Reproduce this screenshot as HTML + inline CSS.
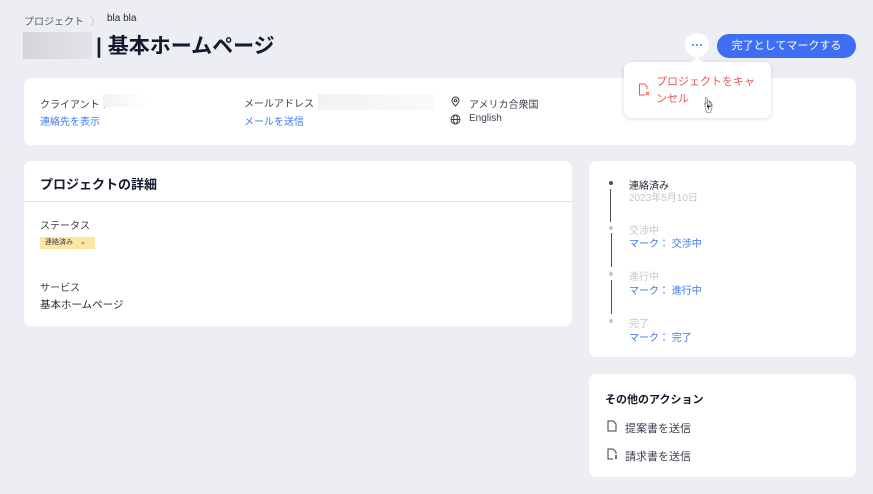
<!DOCTYPE html>
<html><head><meta charset="utf-8"><style>
*{margin:0;padding:0;box-sizing:border-box}
body{width:873px;height:494px;background:#eceef3;font-family:"Liberation Sans","Noto Sans CJK JP",sans-serif;position:relative;overflow:hidden;color:#1f2433}
.a{position:absolute}
.card{position:absolute;background:#fff;border-radius:7px}
.s{font-size:10px;color:#3a3f4d}
.lnk{font-size:10px;color:#3b78f0}
.g{color:#c4c7cf}
</style></head><body>
<div class="a" style="left:24px;top:13px;font-size:10px;color:#555a66">プロジェクト</div>
<div class="a" style="left:90px;top:13px;font-size:10px;color:#c0c3ca">〉</div>
<div class="a" style="left:107px;top:13px;font-size:10px;color:#1f2433">bla bla</div>
<div class="a" style="left:23px;top:32px;width:69px;height:27px;background:linear-gradient(90deg,#d3d5da,#e2e4e8)"></div>
<div class="a" style="left:96px;top:30px;font-size:21px;font-weight:bold;color:#141a2b">| 基本ホームページ</div>
<div class="a" style="left:685px;top:33px;width:24px;height:24px;border-radius:50%;background:#fff"></div>
<div class="a" style="left:692px;top:44px;width:2px;height:2px;background:#3b78f0;border-radius:1px;box-shadow:4px 0 0 #3b78f0,8px 0 0 #3b78f0"></div>
<div class="a" style="left:717px;top:34px;width:139px;height:24px;border-radius:12px;background:#3e6ef3;color:#fff;font-size:11px;text-align:center;line-height:24px">完了としてマークする</div>

<div class="card" style="left:24px;top:78px;width:832px;height:67px"></div>
<div class="a s" style="left:40px;top:96px">クライアント：</div>
<div class="a" style="left:103px;top:94px;width:45px;height:13px;background:linear-gradient(90deg,#f1f2f4,#fff)"></div>
<div class="a lnk" style="left:40px;top:113px">連絡先を表示</div>
<div class="a s" style="left:244px;top:95px">メールアドレス：</div>
<div class="a" style="left:318px;top:94px;width:116px;height:16px;background:linear-gradient(90deg,#f1f2f4,#fafafa)"></div>
<div class="a lnk" style="left:244px;top:113px">メールを送信</div>
<svg class="a" style="left:450px;top:96px" width="11" height="11" viewBox="0 0 11 11" fill="none" stroke="#3a3f4d"><path d="M5.5 10C3 7.5 2 6 2 4.5a3.5 3.5 0 0 1 7 0C9 6 8 7.5 5.5 10z"/><circle cx="5.5" cy="4.5" r="1.3"/></svg>
<div class="a s" style="left:469px;top:96px">アメリカ合衆国</div>
<svg class="a" style="left:450px;top:114px" width="11" height="11" viewBox="0 0 11 11" fill="none" stroke="#3a3f4d"><circle cx="5.5" cy="5.5" r="4.5"/><ellipse cx="5.5" cy="5.5" rx="2" ry="4.5"/><path d="M1 5.5h9"/></svg>
<div class="a s" style="left:469px;top:113px">English</div>

<div class="card" style="left:624px;top:62px;width:147px;height:56px;box-shadow:0 1px 5px rgba(0,0,0,.15)"></div>
<div class="a" style="left:693px;top:58px;width:8px;height:8px;background:#fff;transform:rotate(45deg)"></div>
<svg class="a" style="left:638px;top:83px" width="12" height="13" viewBox="0 0 12 13" fill="none" stroke="#e8585a"><path d="M7 12H1.5V1h5l2.5 2.5V6"/><path d="M8 9l3 3M11 9l-3 3"/></svg>
<div class="a" style="left:656px;top:74px;font-size:11px;line-height:17px;color:#e8585a;width:105px">プロジェクトをキャンセル</div>
<div class="a" style="left:700px;top:92px;font-size:16px">☝</div>

<div class="card" style="left:24px;top:161px;width:548px;height:165px"></div>
<div class="a" style="left:40px;top:174px;font-size:13px;font-weight:bold;color:#141a2b">プロジェクトの詳細</div>
<div class="a" style="left:24px;top:201px;width:548px;height:1px;background:#dfe1e6"></div>
<div class="a s" style="left:40px;top:217px">ステータス</div>
<div class="a" style="left:40px;top:237px;width:55px;height:12px;background:#fde4a1;font-size:7px;line-height:12px;padding-left:5px;color:#3a3f4d">連絡済み　⌄</div>
<div class="a s" style="left:40px;top:279px">サービス</div>
<div class="a" style="left:40px;top:297px;font-size:10.5px;color:#1f2433">基本ホームページ</div>

<div class="card" style="left:589px;top:161px;width:267px;height:196px"></div>
<div class="a" style="left:609px;top:181px;width:4px;height:4px;border-radius:50%;background:#4a4f5e"></div>
<div class="a" style="left:610px;top:189px;width:1px;height:33px;background:#4a4f5e"></div>
<div class="a" style="left:609px;top:226px;width:4px;height:4px;border-radius:50%;background:#c4c7cf"></div>
<div class="a" style="left:611px;top:233px;width:1px;height:34px;background:#4a4f5e"></div>
<div class="a" style="left:609px;top:272px;width:4px;height:4px;border-radius:50%;background:#c4c7cf"></div>
<div class="a" style="left:611px;top:280px;width:1px;height:34px;background:#4a4f5e"></div>
<div class="a" style="left:609px;top:319px;width:4px;height:4px;border-radius:50%;background:#c4c7cf"></div>
<div class="a s" style="left:629px;top:177px;color:#1f2433">連絡済み</div>
<div class="a s g" style="left:629px;top:189px">2023年5月10日</div>
<div class="a s g" style="left:629px;top:222px">交渉中</div>
<div class="a lnk" style="left:629px;top:235px">マーク： 交渉中</div>
<div class="a s g" style="left:629px;top:268px">進行中</div>
<div class="a lnk" style="left:629px;top:282px">マーク： 進行中</div>
<div class="a s g" style="left:629px;top:315px">完了</div>
<div class="a lnk" style="left:629px;top:329px">マーク： 完了</div>

<div class="card" style="left:589px;top:374px;width:267px;height:103px"></div>
<div class="a" style="left:605px;top:391px;font-size:11px;font-weight:bold;color:#141a2b">その他のアクション</div>
<svg class="a" style="left:607px;top:420px" width="10" height="12" viewBox="0 0 10 12" fill="none" stroke="#3a3f4d"><path d="M1 1h5l3 3v7H1z"/></svg>
<div class="a" style="left:625px;top:420px;font-size:11px;color:#3a3f4d">提案書を送信</div>
<svg class="a" style="left:607px;top:448px" width="11" height="12" viewBox="0 0 11 12" fill="none" stroke="#3a3f4d"><path d="M6 11H1V1h5l3 3v2"/><path d="M9 7v4M8 8h2M8 10h2"/></svg>
<div class="a" style="left:625px;top:448px;font-size:11px;color:#3a3f4d">請求書を送信</div>
</body></html>
